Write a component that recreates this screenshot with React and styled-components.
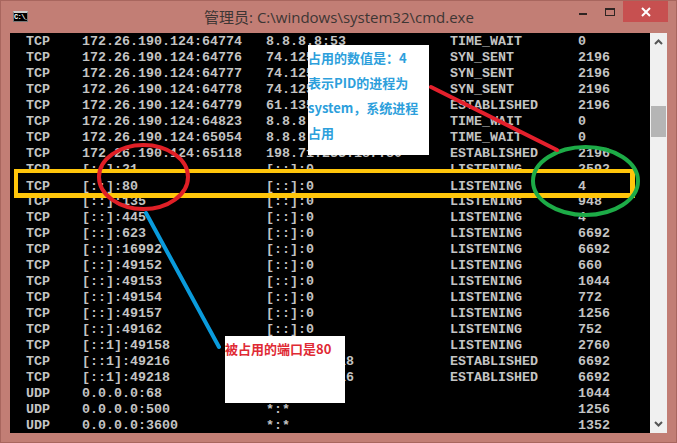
import React from 'react';
import styled, { createGlobalStyle } from 'styled-components';

const Global = createGlobalStyle`
  html, body { margin: 0; padding: 0; background: #c07f76; }
`;

const Win = styled.div`
  position: relative;
  box-sizing: border-box;
  width: 677px;
  height: 443px;
  overflow: hidden;
  background: #c27e75;
  border: 1px solid #a8665e;
  display: flex;
  flex-direction: column;
`;

const TitleBar = styled.div`
  position: relative;
  height: 32px;
  flex: none;
  display: flex;
  align-items: center;
  justify-content: center;
`;

const TitleText = styled.div`
  font-family: "Open Sans", "Noto Sans CJK SC", sans-serif;
  font-size: 15px;
  color: #3d3634;
  margin-left: 1px;
  margin-top: -1px;
  white-space: nowrap;
`;

const AppIcon = styled.div`
  position: absolute;
  left: 12px;
  top: 10px;
  width: 15px;
  height: 11px;
  background: #000;
  border: 1px solid #777;
  border-top: 2px solid #cfcfcf;
  box-sizing: border-box;
  color: #fff;
  font: bold 7px/8px "Liberation Mono", monospace;
  letter-spacing: -0.6px;
  overflow: hidden;
`;

const Controls = styled.div`
  position: absolute;
  right: 8px;
  top: 0;
  display: flex;
  align-items: flex-start;
`;

const Ctl = styled.div`
  width: ${({ w }) => w}px;
  height: 21px;
  display: flex;
  align-items: center;
  justify-content: center;
  background: ${({ close }) => (close ? '#c75050' : 'transparent')};
`;

const Body = styled.div`
  flex: none;
  height: 400px;
  margin: 0 9px;
  display: flex;
`;

const Console = styled.div`
  width: 640px;
  height: 400px;
  background: #000;
  overflow: hidden;
`;

const Row = styled.div`
  display: grid;
  grid-template-columns: 56px 184px 184px 128px 1fr;
  padding-left: 16px;
  height: 16px;
  font-family: "Liberation Mono", monospace;
  font-weight: bold;
  font-size: 13.33px;
  line-height: 17px;
  color: #c4c4c4;
  white-space: pre;
`;

const Scrollbar = styled.div`
  position: relative;
  width: 17px;
  height: 400px;
  background: #f0f0f0;
  display: flex;
  flex-direction: column;
  align-items: center;
  justify-content: space-between;
  padding: 6px 0;
  box-sizing: border-box;
`;

const Thumb = styled.div`
  position: absolute;
  left: 1px;
  top: 73px;
  width: 15px;
  height: 31px;
  background: #b5b5b5;
`;

const HighlightBox = styled.div`
  position: absolute;
  left: 13px;
  top: 168px;
  width: 621px;
  height: 29px;
  box-sizing: border-box;
  border: 4px solid #ffc60b;
  border-right-width: 5px;
  border-bottom-width: 5px;
  background: #000;
`;

const BoxedRow = styled(Row)`
  position: absolute;
  left: 9px;
  top: 177px;
  width: 640px;
  box-sizing: border-box;
`;

const Drawing = styled.svg`
  position: absolute;
  left: -1px;
  top: -1px;
  pointer-events: none;
`;

const Note = styled.div`
  position: absolute;
  left: ${({ x }) => x}px;
  top: ${({ y }) => y}px;
  width: ${({ w }) => w}px;
  height: ${({ h }) => h}px;
  padding-top: ${({ pad }) => pad}px;
  box-sizing: border-box;
  background: #fff;
  font-family: "Noto Sans CJK SC", "Open Sans", sans-serif;
  font-weight: bold;
  font-size: 13px;
  white-space: nowrap;
  color: ${({ color }) => color};
`;

const NoteLine = styled.div`
  height: 25px;
  line-height: 25px;
`;

const rows = [
  ['TCP', '172.26.190.124:64774', '8.8.8.8:53', 'TIME_WAIT', '0'],
  ['TCP', '172.26.190.124:64776', '74.125', 'SYN_SENT', '2196'],
  ['TCP', '172.26.190.124:64777', '74.125', 'SYN_SENT', '2196'],
  ['TCP', '172.26.190.124:64778', '74.125', 'SYN_SENT', '2196'],
  ['TCP', '172.26.190.124:64779', '61.135', 'ESTABLISHED', '2196'],
  ['TCP', '172.26.190.124:64823', '8.8.8', 'TIME_WAIT', '0'],
  ['TCP', '172.26.190.124:65054', '8.8.8', 'TIME_WAIT', '0'],
  ['TCP', '172.26.190.124:65118', '198.71.233.187:80', 'ESTABLISHED', '2196'],
  ['TCP', '[::]:21', '[::]:0', 'LISTENING', '2592'],
  ['', '', '', '', ''],
  ['TCP', '[::]:135', '[::]:0', 'LISTENING', '948'],
  ['TCP', '[::]:445', '[::]:0', 'LISTENING', '4'],
  ['TCP', '[::]:623', '[::]:0', 'LISTENING', '6692'],
  ['TCP', '[::]:16992', '[::]:0', 'LISTENING', '6692'],
  ['TCP', '[::]:49152', '[::]:0', 'LISTENING', '660'],
  ['TCP', '[::]:49153', '[::]:0', 'LISTENING', '1044'],
  ['TCP', '[::]:49154', '[::]:0', 'LISTENING', '772'],
  ['TCP', '[::]:49157', '[::]:0', 'LISTENING', '1256'],
  ['TCP', '[::]:49162', '[::]:0', 'LISTENING', '752'],
  ['TCP', '[::1]:49158', '', 'LISTENING', '2760'],
  ['TCP', '[::1]:49216', '[::1]:49218', 'ESTABLISHED', '6692'],
  ['TCP', '[::1]:49218', '[::1]:49216', 'ESTABLISHED', '6692'],
  ['UDP', '0.0.0.0:68', '', '', '1044'],
  ['UDP', '0.0.0.0:500', '*:*', '', '1256'],
  ['UDP', '0.0.0.0:3600', '*:*', '', '1352'],
];

const App = () => (
  <Win>
    <Global />
    <TitleBar>
      <AppIcon>C:\_</AppIcon>
      <TitleText>管理员: C:\windows\system32\cmd.exe</TitleText>
      <Controls>
        <Ctl w={27}>
          <svg width="10" height="10" viewBox="0 0 10 10"><rect x="1" y="6" width="8" height="2" fill="#2f2523" /></svg>
        </Ctl>
        <Ctl w={27}>
          <svg width="12" height="10" viewBox="0 0 12 10"><rect x="1.500" y="1.500" width="9" height="7" fill="none" stroke="#2f2523" strokeWidth="1" /><rect x="1" y="1" width="10" height="2" fill="#2f2523" /></svg>
        </Ctl>
        <Ctl w={45} close>
          <svg width="10" height="10" viewBox="0 0 10 10"><path d="M1 1L9 9M9 1L1 9" stroke="#fff" strokeWidth="2" /></svg>
        </Ctl>
      </Controls>
    </TitleBar>
    <Body>
      <Console>
        {rows.map((r, i) => (
          <Row key={i}>
            {r.map((c, j) => <span key={j}>{c}</span>)}
          </Row>
        ))}
      </Console>
      <Scrollbar>
        <svg width="9" height="6" viewBox="0 0 9 6"><path d="M1 5L4.500 1.500L8 5" fill="none" stroke="#555" strokeWidth="2" /></svg>
        <Thumb />
        <svg width="9" height="6" viewBox="0 0 9 6"><path d="M1 1L4.500 4.500L8 1" fill="none" stroke="#555" strokeWidth="2" /></svg>
      </Scrollbar>
    </Body>
    <HighlightBox />
    <BoxedRow>
      <span>TCP</span><span>[::]:80</span><span>[::]:0</span><span>LISTENING</span><span>4</span>
    </BoxedRow>
    <Note x={307} y={44} w={121} h={110} pad={0} color="#2d9fdc">
      <NoteLine>占用的数值是：4</NoteLine>
      <NoteLine>表示PID的进程为</NoteLine>
      <NoteLine>system，系统进程</NoteLine>
      <NoteLine>占用</NoteLine>
    </Note>
    <Note x={224} y={335} w={120} h={67} pad={0} color="#e02a34">
      <NoteLine>被占用的端口是80</NoteLine>
    </Note>
    <Drawing width="677" height="443">
      <ellipse cx="143.500" cy="177" rx="44.500" ry="32" fill="none" stroke="#e01f26" strokeWidth="4" />
      <ellipse cx="585.500" cy="181" rx="52.500" ry="34" fill="none" stroke="#1dab47" strokeWidth="4" />
      <line x1="431" y1="87" x2="557" y2="150" stroke="#e3202c" strokeWidth="4" strokeLinecap="round" />
      <line x1="146" y1="213" x2="219" y2="347" stroke="#0a9bdc" strokeWidth="4" strokeLinecap="round" />
    </Drawing>
  </Win>
);

export default App;
